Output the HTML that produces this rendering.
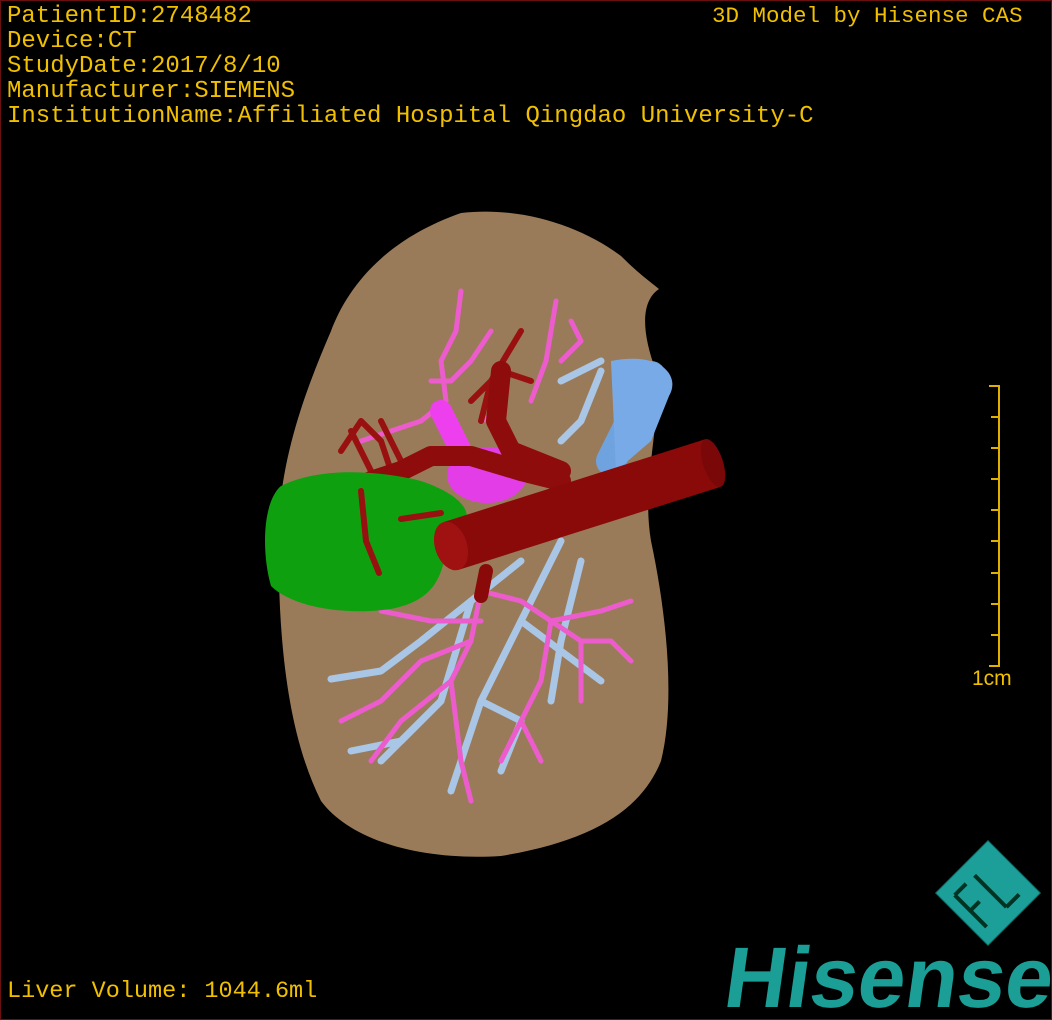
<!DOCTYPE html>
<html><head><meta charset="utf-8"><style>
html,body{margin:0;padding:0;background:#000}
#c{position:relative;width:1050px;height:1018px;border:1px solid #6a1010;background:#000;overflow:hidden}
.t{position:absolute;font-family:"Liberation Mono",monospace;color:#f0c000;white-space:pre;line-height:25px}
</style></head><body><div id="c">
<div class="t" style="left:6px;top:3px;font-size:24px">PatientID:2748482
Device:CT
StudyDate:2017/8/10
Manufacturer:SIEMENS
InstitutionName:Affiliated Hospital Qingdao University-C</div>
<div class="t" style="left:711px;top:3px;font-size:22.5px">3D Model by Hisense CAS</div>
<div class="t" style="left:6px;top:978px;font-size:23.5px">Liver Volume: 1044.6ml</div>
<div class="t" style="left:971px;top:665px;font-size:21px;font-family:'Liberation Sans',sans-serif">1cm</div>
<svg width="1050" height="1018" style="position:absolute;left:0;top:0">
<g stroke="#e0b000" stroke-width="2">
<line x1="998" y1="384" x2="998" y2="666"/>
<line x1="988" y1="385" x2="998" y2="385"/><line x1="990" y1="416" x2="998" y2="416"/><line x1="990" y1="447" x2="998" y2="447"/><line x1="990" y1="478" x2="998" y2="478"/><line x1="990" y1="509" x2="998" y2="509"/><line x1="990" y1="540" x2="998" y2="540"/><line x1="990" y1="572" x2="998" y2="572"/><line x1="990" y1="603" x2="998" y2="603"/><line x1="990" y1="634" x2="998" y2="634"/><line x1="988" y1="665" x2="998" y2="665"/>
</g>
<path d="M460 212 C520 205 580 225 620 255 C640 275 655 285 658 288 C640 300 640 330 655 370 C660 430 640 480 650 540 C665 610 675 700 660 760 C640 810 590 840 500 855 C420 860 350 840 320 800 C290 740 280 660 278 580 C270 480 300 400 330 330 C345 290 380 240 460 212Z" fill="#9a7b59"/>
<g fill="none" stroke-linecap="round" stroke-linejoin="round">
<g stroke="#a9c6e6" stroke-width="7">
<path d="M600 360 L560 380 M600 370 L580 420 L560 440"/>
<path d="M520 560 L470 600 L420 640 L380 670 L330 678"/>
<path d="M470 600 L440 700 L400 740 L350 750"/>
<path d="M560 540 L520 620 L480 700 L450 790"/>
<path d="M520 620 L560 650 L600 680 M480 700 L520 720 L500 770"/>
<path d="M580 560 L560 640 L550 700 M440 700 L420 720 L380 760"/>
</g>
<g stroke="#6fa3e0" stroke-width="30"><path d="M650 375 L630 420 L610 460"/></g>
<path d="M610 360 C660 350 680 375 668 395 L650 440 L615 470 Z" fill="#79aae8" stroke="none"/>
<g stroke="#ec5ccd" stroke-width="5">
<path d="M460 290 L455 330 L440 360 L445 400 L420 420 L390 430 L360 440"/>
<path d="M490 330 L470 360 L450 380 L430 380 M555 300 L545 360 L530 400 M570 320 L580 340 L560 360 M500 410 L480 420"/>
<path d="M480 590 L470 640 L450 680 L400 720 L370 760 M480 620 L430 620 L380 610"/>
<path d="M480 590 L520 600 L550 620 L580 640 L610 640 L630 660 M550 620 L540 680 L520 720 L500 760"/>
<path d="M550 620 L600 610 L630 600 M580 640 L580 700 M450 680 L460 760 L470 800 M520 720 L540 760"/>
<path d="M470 640 L420 660 L380 700 L340 720"/>
</g>
<g stroke="#ee3fee" stroke-width="22"><path d="M440 410 L470 470"/></g>
<ellipse cx="486" cy="474" rx="40" ry="28" fill="#e33de8" stroke="none"/>
<g stroke="#991010" stroke-width="6">
<path d="M340 450 L360 420 L380 440 L390 470 M350 430 L370 470 M380 420 L400 460 L410 470"/>
<path d="M520 330 L490 380 L480 420 M470 400 L500 370 L530 380"/>
</g>
<g stroke="#8e0c0c" stroke-width="20">
<path d="M370 480 L400 470 L430 455 L470 455 L520 470 L560 480"/>
<path d="M500 370 L495 420 L510 450 L560 470"/>
</g>
</g>
<path d="M280 485 C320 465 380 470 420 480 C450 490 470 505 465 520 L445 550 C440 580 430 600 390 608 C340 615 290 605 270 585 C260 550 262 500 280 485Z" fill="#0fa010"/>
<g stroke="#991010" stroke-width="6" fill="none" stroke-linecap="round"><path d="M360 490 L365 540 L378 572 M400 518 L440 512"/></g>
<g fill="none"><g stroke="#8a0a0a" stroke-width="50" stroke-linecap="butt"><path d="M450 545 L712 462"/></g></g>
<ellipse cx="712" cy="462" rx="10" ry="25" transform="rotate(-18 712 462)" fill="#7a0808"/>
<ellipse cx="450" cy="545" rx="16" ry="25" transform="rotate(-18 450 545)" fill="#a01212"/>
<g stroke="#8a0a0a" stroke-width="14" stroke-linecap="round"><path d="M485 570 L480 595"/></g>
<g transform="rotate(-45 987 892)">
<rect x="950" y="855" width="74" height="74" fill="#1c9e99" stroke="#0f6e6a" stroke-width="1"/>
<path d="M962 870 L962 915 M962 870 L978 870 M962 892 L975 892 M990 870 L990 915 M990 915 L1008 915" stroke="#032" stroke-width="4" fill="none"/>
</g>
<text x="722" y="1006" font-family="Liberation Sans,sans-serif" font-weight="bold" font-size="86" fill="#1a9e96" textLength="328" lengthAdjust="spacingAndGlyphs" transform="skewX(-8) translate(140 0)">Hisense</text>
</svg>
</div></body></html>
